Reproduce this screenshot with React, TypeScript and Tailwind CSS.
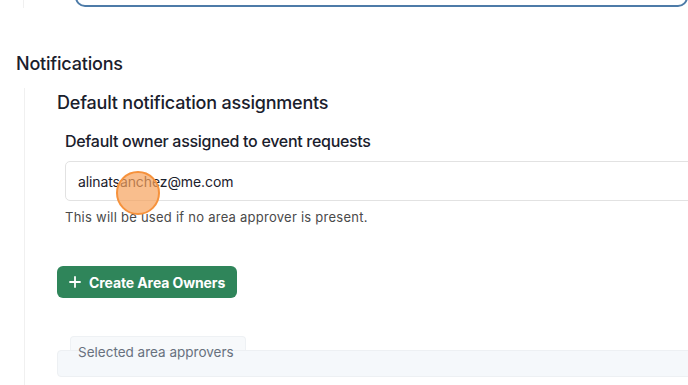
import React from 'react';

const font = { fontFamily: 'Inter, "Noto Sans", sans-serif' };

export default function App() {
  return (
    <div className="w-[688px] h-[385px] overflow-hidden bg-white relative text-[#1a202c]" style={font}>
      {/* top of previous section */}
      <div className="flex h-[8px]">
        <div className="w-[24px] border-r border-[#f0f0f0]" />
        <div className="ml-[51px] flex-1 -mt-[20px] h-[27px] border-2 border-[#4d7ba8] rounded-[10px]" />
      </div>

      <div className="mt-[44px] pl-[16px]">
        <h2 className="text-[18px] font-medium leading-[23px] tracking-[-0.2px]">Notifications</h2>
      </div>

      <div className="mt-[13px] ml-[24px] border-l border-[#f0f0f0] pl-[32px] h-[400px]">
        <h3 className="pt-[3px] text-[18px] font-medium leading-[23px] tracking-[-0.2px]">Default notification assignments</h3>

        <div className="pl-[8px] mt-[17px]">
          <label className="block text-[16px] font-medium leading-[20px] tracking-[-0.3px]">Default owner assigned to event requests</label>
          <div className="relative mt-[10px] h-[40px] w-[700px] border border-[#e2e2e2] rounded-[5px] flex items-center pl-[12px]">
            <span className="text-[14px] tracking-[-0.1px] text-[#1a202c]">alinatsanchez@me.com</span>
            <div className="absolute left-[50px] top-[9px] w-[44px] h-[44px] rounded-full bg-[#f7a35c]/70 border-2 border-[#f6923c]" />
          </div>
          <p className="mt-[7px] text-[13px] text-[#4a4a4a] leading-[18px] tracking-[0.25px]">This will be used if no area approver is present.</p>
        </div>

        <button className="mt-[40px] h-[32px] w-[180px] rounded-[6px] bg-[#2f855a] text-white text-[14px] font-bold flex items-center pl-[12px] gap-[8px] tracking-[-0.1px]">
          <svg width="12" height="12" viewBox="0 0 12 12" fill="none" stroke="white" strokeWidth="1.8" strokeLinecap="round">
            <path d="M6 1v10M1 6h10" />
          </svg>
          Create Area Owners
        </button>

        <div className="mt-[38px] relative">
          <div className="ml-[13px] w-[176px] h-[20px] bg-[#f7f9fb] border border-b-0 border-[#eef1f4] rounded-t-[4px]" />
          <div className="-mt-[6px] h-[27px] w-[700px] bg-[#f5f8fb] border border-[#edf0f3] rounded-[4px]" />
          <span className="absolute left-[21px] top-[6px] text-[13.5px] text-[#68717e]">Selected area approvers</span>
        </div>
      </div>
    </div>
  );
}
